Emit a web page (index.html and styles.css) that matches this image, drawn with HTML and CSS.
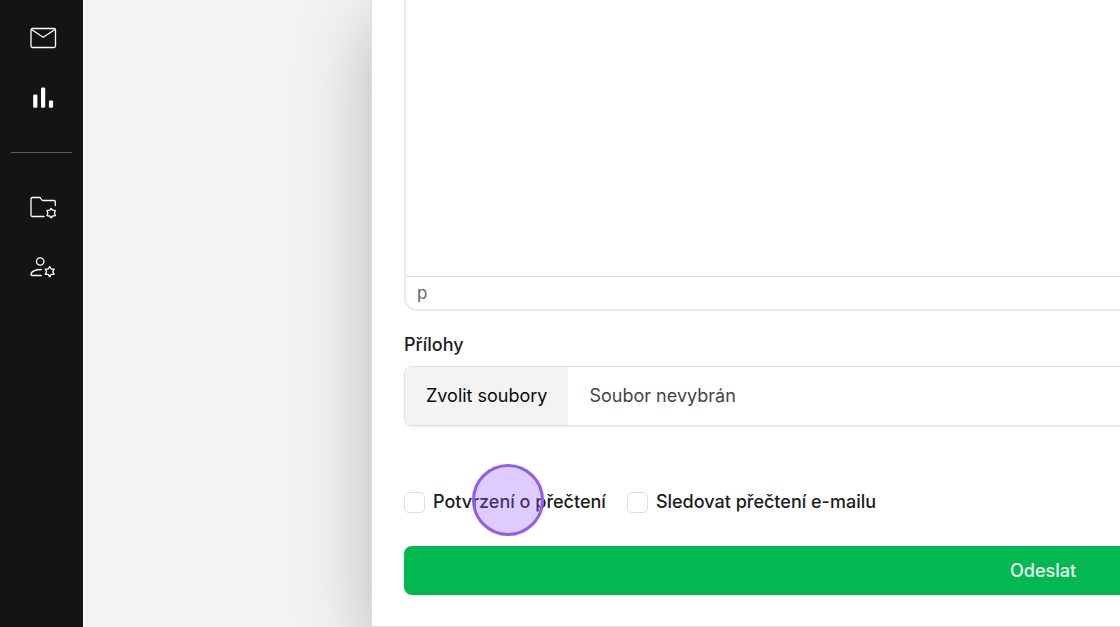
FILE: index.html
```html
<!DOCTYPE html>
<html lang="cs">
<head>
<meta charset="utf-8">
<meta name="viewport" content="width=device-width, initial-scale=1">
<title>Nový e-mail</title>
<link rel="stylesheet" href="styles.css">
</head>
<body>
<div class="app">
  <nav class="sidebar" aria-label="Hlavní navigace">
    <a class="nav-link" href="#posta" aria-label="Pošta">
      <svg class="icon" viewBox="0 0 28 28"><rect x="2" y="4.500" width="24.500" height="19" rx="1.500"/><path d="M2.500 5.500 14.200 13.200 26 5.500"/></svg>
    </a>
    <a class="nav-link" href="#statistiky" aria-label="Statistiky">
      <svg class="icon icon-solid" viewBox="0 0 28 28"><rect x="4.200" y="10.500" width="4.200" height="13.300" rx="1.200"/><rect x="12" y="3.500" width="4.200" height="20.300" rx="1.200"/><rect x="19.900" y="16.500" width="4.200" height="7.300" rx="1.200"/></svg>
    </a>
    <hr class="divider">
    <a class="nav-link" href="#slozky" aria-label="Správa složek">
      <svg class="icon" viewBox="0 0 28 28"><path d="M15 23.500H3.300A1.300 1.300 0 0 1 2 22.200V5.800A1.300 1.300 0 0 1 3.300 4.500H10.500C12.300 4.500 12 7.500 14 7.500H25A1.300 1.300 0 0 1 26.300 8.800V12.500"/><path d="m22.200 15.500 1.500 1.700 2.700.4-.9 2.500.9 2.500-2.700.4-1.500 1.700-1.500-1.700-2.700-.4.900-2.500-.9-2.500 2.700-.4Z"/></svg>
    </a>
    <a class="nav-link" href="#uzivatele" aria-label="Správa uživatelů">
      <svg class="icon" viewBox="0 0 28 28"><circle cx="11.200" cy="8.500" r="3.700"/><path d="M12.200 16.500C6.500 16.500 2 18.500 2 21.500Q2 22.500 3 22.500H12.200"/><path d="m20.700 13.600 1.500 2.400 2.900.1-1.300 2.600 1.300 2.600-2.900.1-1.500 2.400-1.500-2.400-2.900-.1 1.300-2.600-1.300-2.600 2.900-.1Z"/></svg>
    </a>
  </nav>
  <main class="stage">
    <form class="panel">
      <div class="editor">
        <textarea class="editor-text" aria-label="Text zprávy"></textarea>
        <div class="editor-status">p</div>
      </div>
      <label class="field-label" for="files">Přílohy</label>
      <div class="file-field">
        <input class="file-input" id="files" type="file" multiple>
        <span class="file-button">Zvolit soubory</span>
        <span class="file-name">Soubor nevybrán</span>
      </div>
      <div class="options">
        <div class="option">
          <input class="check" id="receipt" type="checkbox">
          <label class="option-label" for="receipt">Potvrzení o přečtení<span class="pointer"></span></label>
        </div>
        <div class="option">
          <input class="check" id="track" type="checkbox">
          <label class="option-label" for="track">Sledovat přečtení e-mailu</label>
        </div>
      </div>
      <button class="submit" type="button">Odeslat</button>
    </form>
  </main>
</div>
</body>
</html>
```
FILE: styles.css
```css
* {
  box-sizing: border-box;
}

body {
  margin: 0;
  overflow: hidden;
  background: #f3f3f3;
  color: #1c1c1e;
  font: 500 18px/24px Inter, "Liberation Sans", sans-serif;
}

.app {
  display: flex;
  height: 100vh;
}

.sidebar {
  flex: none;
  display: flex;
  flex-direction: column;
  align-items: center;
  width: 84px;
  padding: 8px 11px;
  background: #141414;
  border-right: 1px solid #fff;
}

.nav-link {
  display: flex;
  align-items: center;
  justify-content: center;
  width: 60px;
  height: 60px;
  padding-left: 2px;
  color: #fff;
}

.icon {
  width: 28px;
  height: 28px;
  fill: none;
  stroke: currentColor;
  stroke-width: 1.3;
  stroke-linecap: round;
  stroke-linejoin: round;
}

.icon-solid {
  fill: currentColor;
  stroke: none;
}

.divider {
  width: 100%;
  height: 1px;
  margin: 24px 0;
  border: 0;
  background: #5c5c5c;
}

.stage {
  flex: 1;
  display: flex;
  min-width: 0;
  padding-left: 287px;
}

.panel {
  flex: none;
  display: flex;
  flex-direction: column;
  width: 120vw;
  padding: 0 32px 31px;
  background: #fff;
  border: solid #dedede;
  border-width: 0 1px 1px;
  box-shadow: 0 24px 68px rgba(0, 0, 0, 0.25);
}

.editor {
  flex: 1;
  display: flex;
  flex-direction: column;
  border: 2px solid #eaeaea;
  border-top: 0;
  border-radius: 0 0 13px 13px;
}

.editor-text {
  flex: 1;
  width: 100%;
  padding: 16px;
  border: 0;
  background: transparent;
  font: inherit;
  resize: none;
  outline: none;
}

.editor-status {
  padding: 4px 11px;
  border-top: 1px solid #e0e0e0;
  color: #5f6773;
  font-size: 17px;
  font-weight: 400;
}

.field-label {
  margin: 22px 0 9px;
}

.file-field {
  position: relative;
  display: flex;
  height: 60px;
  overflow: hidden;
  border: 1px solid #dfdfdf;
  border-radius: 8px;
  box-shadow: 0 1px 2px rgba(0, 0, 0, 0.08);
  line-height: 58px;
  font-weight: 400;
}

.file-input {
  position: absolute;
  inset: 0;
  width: 100%;
  opacity: 0;
}

.file-button {
  padding: 0 21px;
  background: #f3f3f3;
  color: #0a0a0a;
}

.file-name {
  padding: 0 21px;
  color: #444;
}

.options {
  display: flex;
  gap: 21px;
  margin: 64px 0 32px;
}

.option {
  display: flex;
  align-items: center;
  gap: 8px;
}

.check {
  appearance: none;
  width: 21px;
  height: 21px;
  margin: 0;
  border: 1px solid #dedede;
  border-radius: 5px;
  background: #fff;
}

.option-label {
  position: relative;
}

.pointer {
  position: absolute;
  top: -26px;
  left: 39px;
  width: 72px;
  height: 72px;
  border: 3px solid #8f5de8;
  border-radius: 50%;
  background: rgba(151, 93, 255, 0.32);
  pointer-events: none;
}

.submit {
  height: 49px;
  border: 0;
  border-radius: 8px;
  background: #02b851;
  color: #f0fdf4;
  font: inherit;
}
```
